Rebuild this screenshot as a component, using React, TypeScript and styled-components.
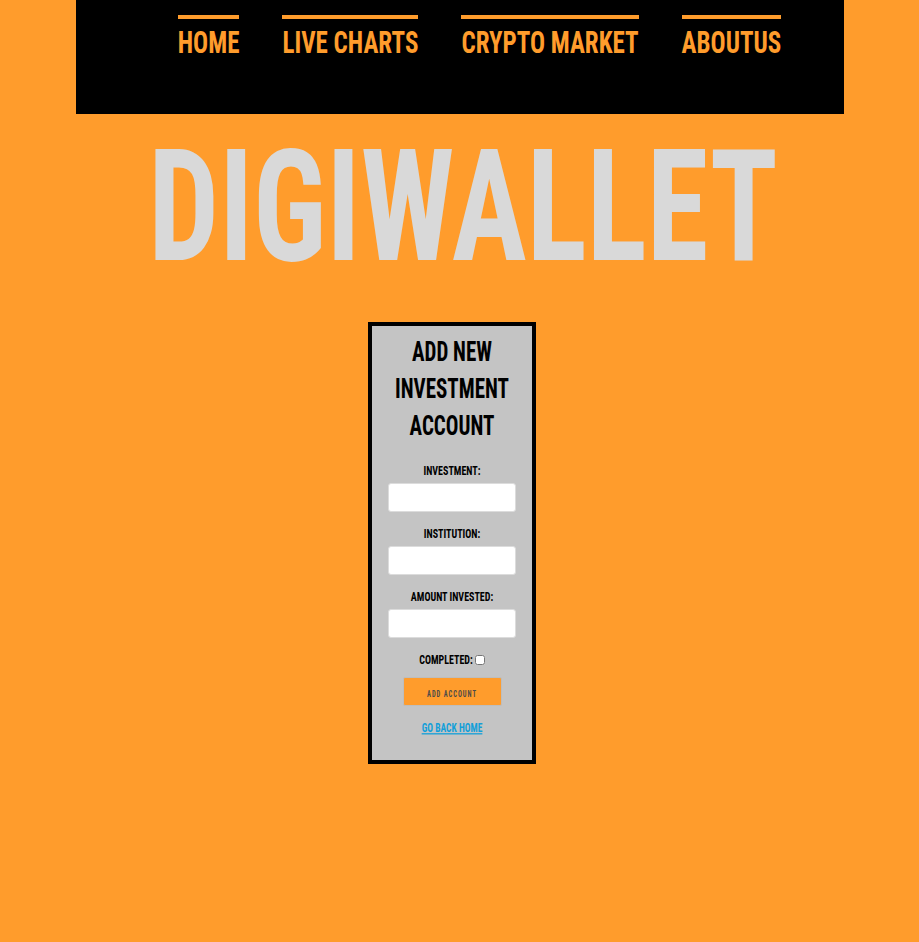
import styled, { createGlobalStyle } from "styled-components";

const ORANGE = "#ff9c2c";
// the reference face is taller than Roboto Condensed; stretch it to match
const STRETCH = "scaleY(1.29)";

const GlobalStyle = createGlobalStyle`
  html, body {
    background: ${ORANGE};
  }

  body {
    margin: 0;
    font-family: "Roboto Condensed", "DejaVu Sans Condensed", sans-serif;
    font-weight: 700;
    color: #000;
  }
`;

const Nav = styled.nav`
  width: 768px;
  height: 114px;
  margin: 0 auto;
  background: #000;
`;

const NavList = styled.ul`
  display: flex;
  justify-content: center;
  gap: 43px;
  margin: 0;
  padding: 15px 0 0 40px;
  list-style: none;
`;

const NavItem = styled.li`
  display: flex;
  border-top: 4px solid ${ORANGE};
  padding-top: 11px;
`;

const NavLink = styled.a`
  display: inline-block;
  color: ${ORANGE};
  font-size: 25px;
  line-height: 25px;
  text-decoration: none;
  white-space: nowrap;
  transform: ${STRETCH};
`;

const Title = styled.h1`
  margin: 30px 0 0;
  padding-left: 7px;
  text-align: center;
  color: #d9d9d9;
  font-size: 125.5px;
  line-height: 127px;
  font-weight: 700;
  transform: scaleY(1.235);
`;

const Main = styled.main`
  display: flex;
  justify-content: center;
  padding: 51px 15px 0 0;
`;

const Card = styled.section`
  width: 160px;
  border: 4px solid #000;
  background: #c4c4c4;
  display: flex;
  flex-direction: column;
  align-items: center;
  padding: 20px 0 27px;
  text-align: center;
`;

const CardTitle = styled.h2`
  width: 100%;
  margin: 0;
  font-size: 21px;
  line-height: 28.8px;
  font-weight: 700;
  transform: ${STRETCH};
`;

const Label = styled.label<{ $gap: number }>`
  display: block;
  margin-top: ${(p) => p.$gap}px;
  font-size: 10px;
  line-height: 10px;
  white-space: nowrap;
  transform: ${STRETCH};
`;

const Input = styled.input`
  box-sizing: border-box;
  width: 128px;
  height: 29px;
  margin: 7px 0 0;
  padding: 0 5px;
  border: 1px solid #dcdcdc;
  border-radius: 3px;
  background: #fff;
  outline: none;
`;

const CheckRow = styled.div`
  display: flex;
  align-items: center;
  height: 10px;
  margin-top: 17px;
`;

const CheckText = styled.span`
  display: inline-block;
  font-size: 10px;
  line-height: 10px;
  white-space: nowrap;
  transform: ${STRETCH};
`;

const Checkbox = styled.input`
  width: 10px;
  height: 10px;
  margin: 0 0 0 2px;
`;

const Button = styled.button`
  width: 99px;
  height: 29px;
  margin-top: 12px;
  padding: 0;
  border: 1px solid #bdbdbd;
  border-radius: 2px;
  background: ${ORANGE};
  font: inherit;
  cursor: pointer;
`;

const ButtonText = styled.span`
  display: inline-block;
  font-size: 6.5px;
  line-height: 7px;
  letter-spacing: 1px;
  color: #4a4a4a;
  transform: ${STRETCH};
`;

const BackLink = styled.a`
  display: inline-block;
  margin-top: 16.5px;
  font-size: 9.5px;
  line-height: 10px;
  color: #139fd9;
  text-decoration: underline;
  white-space: nowrap;
  transform: ${STRETCH};
`;

const links = ["HOME", "LIVE CHARTS", "CRYPTO MARKET", "ABOUTUS"];

const fields = [
  { id: "investment", label: "INVESTMENT:" },
  { id: "institution", label: "INSTITUTION:" },
  { id: "amount", label: "AMOUNT INVESTED:" },
];

const App = () => {
  return (
    <>
      <GlobalStyle />
      <Nav>
        <NavList>
          {links.map((l) => (
            <NavItem key={l}>
              <NavLink href="#">{l}</NavLink>
            </NavItem>
          ))}
        </NavList>
      </Nav>
      <Title>DIGIWALLET</Title>
      <Main>
        <Card>
          <CardTitle>ADD NEW INVESTMENT ACCOUNT</CardTitle>
          {fields.map((f, i) => (
            <div key={f.id} style={{ display: "contents" }}>
              <Label htmlFor={f.id} $gap={i === 0 ? 34 : 17}>
                {f.label}
              </Label>
              <Input id={f.id} type="text" />
            </div>
          ))}
          <CheckRow>
            <CheckText>COMPLETED:</CheckText>
            <Checkbox type="checkbox" />
          </CheckRow>
          <Button type="button">
            <ButtonText>ADD ACCOUNT</ButtonText>
          </Button>
          <BackLink href="#">GO BACK HOME</BackLink>
        </Card>
      </Main>
    </>
  );
};

export default App;
